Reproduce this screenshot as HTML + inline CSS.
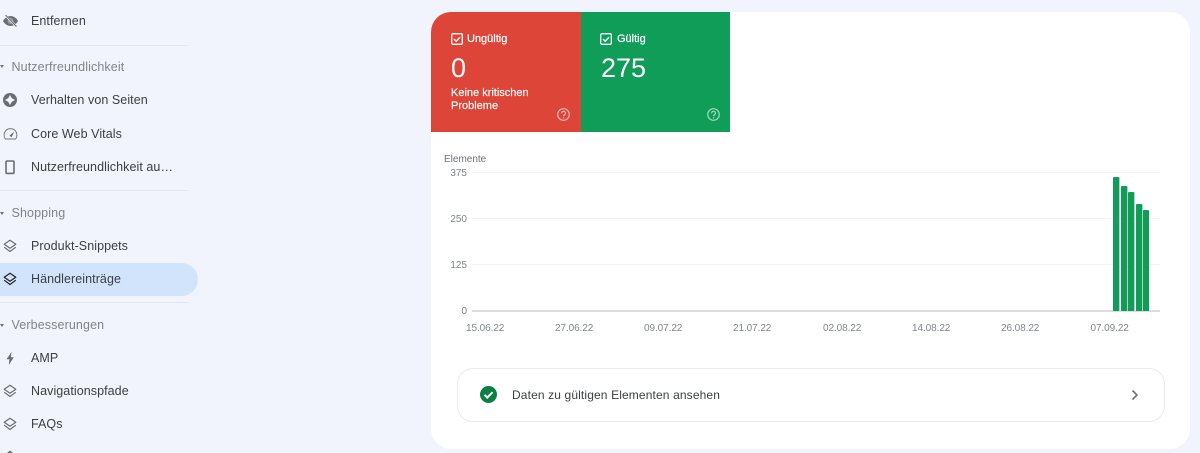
<!DOCTYPE html>
<html lang="de"><head><meta charset="utf-8"><title>Händlereinträge</title>
<style>
html,body{margin:0;padding:0;background:#f1f4fc}
body{width:1200px;height:453px;overflow:hidden;font-family:"Liberation Sans",sans-serif;position:relative}
#r{position:absolute;left:0;top:0;width:1200px;height:453px;overflow:hidden;background:#f1f4fc;filter:blur(.3px)}
.a{position:absolute;white-space:nowrap}
.n{left:31px;font-size:12.5px;line-height:16px;color:#3c4043;letter-spacing:.07px}
.h{left:11.5px;font-size:12.5px;line-height:16px;color:#80858a;letter-spacing:.12px}
.d{left:0;width:188px;height:1px;background:#e4e7ec}
.t{left:0;width:0;height:0;border-left:2.5px solid transparent;border-right:2.5px solid transparent;border-top:3px solid #6f7478}
svg{position:absolute;overflow:visible}
.card{left:431px;top:12px;width:759px;height:437px;background:#fff;border-radius:20px;overflow:hidden}
.y{font-size:10px;line-height:12px;color:#80868b;text-align:right;width:30px;left:437px}
.x{font-size:10px;line-height:12px;color:#80868b;top:323px;letter-spacing:-.08px}
.g{left:472px;width:688px;height:1px;background:#f1f3f4}
.b{background:#0f9d58;border-radius:1px 1px 0 0;width:6.4px;box-shadow:1px 0 0 #b9cfc2}
.w{font-size:11px;line-height:14px;color:#fff;-webkit-text-stroke:.2px #fff}
</style></head><body><div id="r">
<div class="a" style="left:0;top:263px;width:198px;height:33px;background:#d2e3fc;border-radius:0 17px 17px 0"></div>

<svg style="left:2px;top:12px" width="18" height="18" viewBox="0 0 18 18"><path d="M1 9C3 5.500 6 4 8.500 4s5.500 1.500 7.500 5c-2 3.500-5 5-7.500 5S3 12.500 1 9z" fill="#6a6e72"/><circle cx="8.500" cy="9" r="3" fill="#9a9da1"/><path d="M3 3l12 12" stroke="#f1f4fc" stroke-width="2"/><path d="M3.500 3l11 11.500" stroke="#6a6e72" stroke-width="1"/></svg>
<div class="a n" style="top:13px">Entfernen</div>
<div class="a d" style="top:45px"></div>
<div class="a t" style="top:65px"></div><div class="a h" style="top:59px">Nutzerfreundlichkeit</div>
<svg style="left:3px;top:93px" width="14" height="14" viewBox="0 0 14 14"><circle cx="7" cy="7" r="7" fill="#6a6e72"/><path d="M7 2.500C7.600 5 9 6.400 11.500 7 9 7.600 7.600 9 7 11.500 6.400 9 5 7.600 2.500 7 5 6.400 6.400 5 7 2.500z" fill="#f1f4fc" stroke="#f1f4fc" stroke-width=".8"/></svg>
<div class="a n" style="top:92px">Verhalten von Seiten</div>
<svg style="left:3px;top:127px" width="15" height="13" viewBox="0 0 15 13"><path d="M2.300 12C.5 9.500.7 6 2.800 3.600 5.300 1 9.700 1 12.200 3.600 14.300 6 14.500 9.500 12.700 12z" fill="none" stroke="#777b7f" stroke-width="1"/><path d="M7 8.700l3.600-3.200-2.200 4.100z" fill="#5f6368" stroke="#5f6368" stroke-width=".6"/></svg>
<div class="a n" style="top:125.500px">Core Web Vitals</div>
<svg style="left:5px;top:160px" width="10" height="14" viewBox="0 0 10 14"><rect x="1" y="1" width="8" height="12.400" rx="1" fill="none" stroke="#6a6e72" stroke-width="1.600"/></svg>
<div class="a n" style="top:159px">Nutzerfreundlichkeit au…</div>
<div class="a d" style="top:190px"></div>
<div class="a t" style="top:212px"></div><div class="a h" style="top:205px">Shopping</div>

<svg style="left:3px;top:239px" width="14" height="14" viewBox="0 0 14 14"><path d="M7 1.200l5.800 4L7 9.200 1.200 5.200z M1.200 8.200L7 12.500l5.800-4.300" fill="none" stroke="#6a6e72" stroke-width="1.200" stroke-linejoin="round"/></svg>
<div class="a n" style="top:238px">Produkt-Snippets</div>
<svg style="left:3px;top:272px" width="14" height="14" viewBox="0 0 14 14"><path d="M7 1.200l5.800 4L7 9.200 1.200 5.200z M1.200 8.200L7 12.500l5.800-4.300" fill="none" stroke="#202124" stroke-width="1.200" stroke-linejoin="round"/></svg>
<div class="a n" style="top:271px">Händlereinträge</div>
<div class="a d" style="top:302px"></div>
<div class="a t" style="top:324px"></div><div class="a h" style="top:317px">Verbesserungen</div>
<svg style="left:6px;top:352px" width="8" height="13" viewBox="0 0 8 13"><path d="M5.500 0L.5 7.200H3.400L2.800 13 7.800 5.200H4.800z" fill="#6a6e72"/></svg>
<div class="a n" style="top:350px">AMP</div>
<svg style="left:3px;top:384px" width="14" height="14" viewBox="0 0 14 14"><path d="M7 1.200l5.800 4L7 9.200 1.200 5.200z M1.200 8.200L7 12.500l5.800-4.300" fill="none" stroke="#6a6e72" stroke-width="1.200" stroke-linejoin="round"/></svg>
<div class="a n" style="top:383px">Navigationspfade</div>
<svg style="left:3px;top:417px" width="14" height="14" viewBox="0 0 14 14"><path d="M7 1.200l5.800 4L7 9.200 1.200 5.200z M1.200 8.200L7 12.500l5.800-4.300" fill="none" stroke="#6a6e72" stroke-width="1.200" stroke-linejoin="round"/></svg>
<div class="a n" style="top:416px">FAQs</div>
<svg style="left:6px;top:450px" width="8" height="3" viewBox="0 0 8 3"><path d="M4 0.500L1 3h6z" fill="#6a6e72"/></svg>

<div class="a card">
<div class="a" style="left:0;top:0;width:149.500px;height:120px;background:#dd4539"></div>
<div class="a" style="left:149.500px;top:0;width:149.500px;height:120px;background:#0f9d58"></div>
</div>

<svg style="left:451px;top:33px" width="12" height="12" viewBox="0 0 12 12"><rect x=".7" y=".7" width="10.600" height="10.600" rx="1.300" fill="none" stroke="#fff" stroke-width="1.300"/><path d="M3 6l2.200 2.200L9 4.200" fill="none" stroke="#fff" stroke-width="1.400"/></svg>
<div class="a w" style="left:467px;top:32px">Ungültig</div>
<div class="a" style="left:451px;top:52px;font-size:27px;line-height:32px;color:#fff">0</div>
<div class="a" style="left:451px;top:87px;font-size:11px;line-height:13px;color:#fff;-webkit-text-stroke:.15px #fff">Keine kritischen<br>Probleme</div>
<svg style="left:557px;top:108px" width="13" height="13" viewBox="0 0 13 13"><circle cx="6.500" cy="6.500" r="5.800" fill="none" stroke="#f2b5af" stroke-width="1.200"/><path d="M4.600 5.200c0-2.500 3.900-2.500 3.900 0 0 1.400-1.900 1.500-1.900 3" fill="none" stroke="#f2b5af" stroke-width="1.200"/><circle cx="6.500" cy="9.900" r=".7" fill="#f2b5af"/></svg>

<svg style="left:600px;top:33px" width="12" height="12" viewBox="0 0 12 12"><rect x=".7" y=".7" width="10.600" height="10.600" rx="1.300" fill="none" stroke="#fff" stroke-width="1.300"/><path d="M3 6l2.200 2.200L9 4.200" fill="none" stroke="#fff" stroke-width="1.400"/></svg>
<div class="a w" style="left:617px;top:32px">Gültig</div>
<div class="a" style="left:601px;top:52px;font-size:27px;line-height:32px;color:#fff">275</div>
<svg style="left:707px;top:108px" width="13" height="13" viewBox="0 0 13 13"><circle cx="6.500" cy="6.500" r="5.800" fill="none" stroke="#9fd8bc" stroke-width="1.200"/><path d="M4.600 5.200c0-2.500 3.900-2.500 3.900 0 0 1.400-1.900 1.500-1.900 3" fill="none" stroke="#9fd8bc" stroke-width="1.200"/><circle cx="6.500" cy="9.900" r=".7" fill="#9fd8bc"/></svg>

<div class="a" style="left:444px;top:154px;font-size:10px;line-height:12px;color:#6f7377">Elemente</div>
<div class="a y" style="top:168px">375</div>
<div class="a y" style="top:214px">250</div>
<div class="a y" style="top:260px">125</div>
<div class="a y" style="top:306px">0</div>
<div class="a g" style="top:172px"></div>
<div class="a g" style="top:218px"></div>
<div class="a g" style="top:264px"></div>
<div class="a" style="left:472px;top:310px;width:688px;height:2px;background:#dadce0"></div>

<div class="a b" style="left:1113px;top:177px;height:134px"></div>
<div class="a b" style="left:1120.500px;top:185.500px;height:125.500px"></div>
<div class="a b" style="left:1128px;top:192px;height:119px"></div>
<div class="a b" style="left:1135.500px;top:203.500px;height:107.500px"></div>
<div class="a b" style="left:1143px;top:209.500px;height:101.500px;box-shadow:none"></div>

<div class="a x" style="left:466px">15.06.22</div>
<div class="a x" style="left:555px">27.06.22</div>
<div class="a x" style="left:644px">09.07.22</div>
<div class="a x" style="left:733px">21.07.22</div>
<div class="a x" style="left:823px">02.08.22</div>
<div class="a x" style="left:912px">14.08.22</div>
<div class="a x" style="left:1001px">26.08.22</div>
<div class="a x" style="left:1090.500px">07.09.22</div>

<div class="a" style="left:457px;top:367.500px;width:705.500px;height:52.500px;border:1px solid #e8eaed;border-radius:16px"></div>
<svg style="left:480px;top:386px" width="17" height="17" viewBox="0 0 17 17"><circle cx="8.500" cy="8.500" r="8.500" fill="#0b8043"/><path d="M4.500 8.800l2.800 2.800 5.200-5.400" fill="none" stroke="#fff" stroke-width="2"/></svg>
<div class="a" style="left:512px;top:388px;font-size:12px;line-height:15px;color:#3c4043;letter-spacing:.13px">Daten zu gültigen Elementen ansehen</div>
<svg style="left:1131px;top:389px" width="8" height="12" viewBox="0 0 8 12"><path d="M1.500 1.500L6 6l-4.500 4.500" fill="none" stroke="#6f7377" stroke-width="1.600"/></svg>
</div></body></html>
